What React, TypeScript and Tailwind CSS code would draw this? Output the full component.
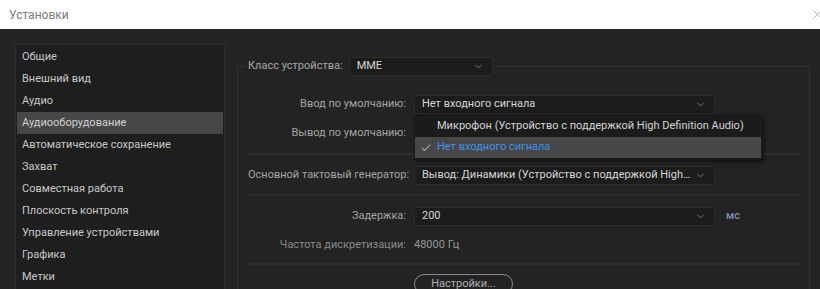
import { Check, ChevronDown, X } from 'lucide-react'

const font = { fontFamily: 'Roboto, "Open Sans", sans-serif' }

const sections = [
  'Общие',
  'Внешний вид',
  'Аудио',
  'Аудиооборудование',
  'Автоматическое сохранение',
  'Захват',
  'Совместная работа',
  'Плоскость контроля',
  'Управление устройствами',
  'Графика',
  'Метки',
]

function Select({ value, width = 'w-[301px]' }: { value: string; width?: string }) {
  return (
    <div
      className={`flex h-[19px] ${width} shrink-0 items-center justify-between rounded-[3px] border border-[#2c2c2c] bg-[#1c1c1c] pl-[7px] pr-[8px] text-[11px] text-[#d6d6d6]`}
    >
      <span className="truncate">{value}</span>
      <ChevronDown className="ml-1 h-[11px] w-[11px] shrink-0 text-[#9a9a9a]" strokeWidth={1.6} />
    </div>
  )
}

function Row({ label, children, dim }: { label: string; children: React.ReactNode; dim?: boolean }) {
  return (
    <div className="flex h-[19px] items-center">
      <div
        className={`w-[158px] shrink-0 whitespace-nowrap text-right text-[11px] ${dim ? 'text-[#8a8a8a]' : 'text-[#a4a4a4]'}`}
      >
        {label}
      </div>
      <div className="relative ml-[8px] flex items-center">{children}</div>
    </div>
  )
}

const Sep = () => <div className="h-[2px] bg-[#2d2d2d]" />

export default function App() {
  return (
    <div className="h-[289px] w-[820px] overflow-hidden" style={font}>
      <div className="flex h-[29px] items-center justify-between bg-white pl-[9px]">
        <span className="text-[12px] text-[#7c7c7c]">Установки</span>
        <X className="mr-[-5px] h-[15px] w-[15px] text-[#9a9a9a]" strokeWidth={1.2} />
      </div>

      <div className="flex h-[260px] bg-[#232323]">
        <div className="ml-[15px] mt-[15px] h-[260px] w-[210px] shrink-0 border border-[#2c2c2c] bg-[#1e1e1e] p-px">
          {sections.map((s) => (
            <div
              key={s}
              className={`flex h-[22px] items-center pl-[5px] text-[11px] ${
                s === 'Аудиооборудование' ? 'bg-[#474747] text-[#d0d0d0]' : 'text-[#c8c8c8]'
              }`}
            >
              {s}
            </div>
          ))}
        </div>

        <fieldset className="ml-[12px] mt-[28px] h-[300px] w-[573px] min-w-0 shrink-0 rounded-[2px] border border-[#333333] pb-0 pl-[10px] pr-[8px] pt-0">
          <legend className="ml-[-3px] flex items-center px-[3px]">
            <span className="mr-[6px] text-[11px] text-[#a8a8a8]">Класс устройства:</span>
            <Select value="MME" width="w-[144px]" />
          </legend>

          <div className="mt-[19px]">
            <Row label="Ввод по умолчанию:">
              <Select value="Нет входного сигнала" />
              <div className="absolute left-0 top-[19px] z-10 w-[348px] border border-[#1a1a1a] bg-[#1b1b1b] shadow-[2px_3px_4px_rgba(0,0,0,0.55)]">
                <div className="flex h-[22px] items-center whitespace-nowrap pl-[22px] text-[11px] text-[#d4d4d4]">
                  Микрофон (Устройство с поддержкой High Definition Audio)
                </div>
                <div className="flex h-[21px] items-center whitespace-nowrap bg-[#474747] text-[11px] text-[#3e91ea]">
                  <Check className="ml-[5px] mr-[5px] h-[12px] w-[12px] text-[#a0a0a0]" strokeWidth={2.2} />
                  Нет входного сигнала
                </div>
              </div>
            </Row>
            <div className="mt-[10px]">
              <Row label="Вывод по умолчанию:">
                <Select value="Динамики (Устройство с поддержкой High Definition Audio)" />
              </Row>
            </div>
            <div className="mt-[10px]">
              <Sep />
            </div>
            <div className="mt-[11px]">
              <Row label="Основной тактовый генератор:">
                <Select value="Вывод: Динамики (Устройство с поддержкой High ..." />
              </Row>
            </div>
            <div className="mt-[9px]">
              <Sep />
            </div>
            <div className="mt-[11px]">
              <Row label="Задержка:">
                <Select value="200" />
                <span className="ml-[11px] text-[11px] font-medium text-[#7f93b4]">мс</span>
              </Row>
            </div>
            <div className="mt-[10px]">
              <Row label="Частота дискретизации:" dim>
                <span className="text-[11px] text-[#999999]">48000 Гц</span>
              </Row>
            </div>
            <div className="mt-[8px]">
              <Sep />
            </div>
            <div className="mt-[9px] flex">
              <button className="ml-[166px] h-[20px] w-[99px] rounded-full border border-[#8a8a8a] text-[11px] text-[#b0b0b0]">
                Настройки...
              </button>
            </div>
          </div>
        </fieldset>
      </div>
    </div>
  )
}
